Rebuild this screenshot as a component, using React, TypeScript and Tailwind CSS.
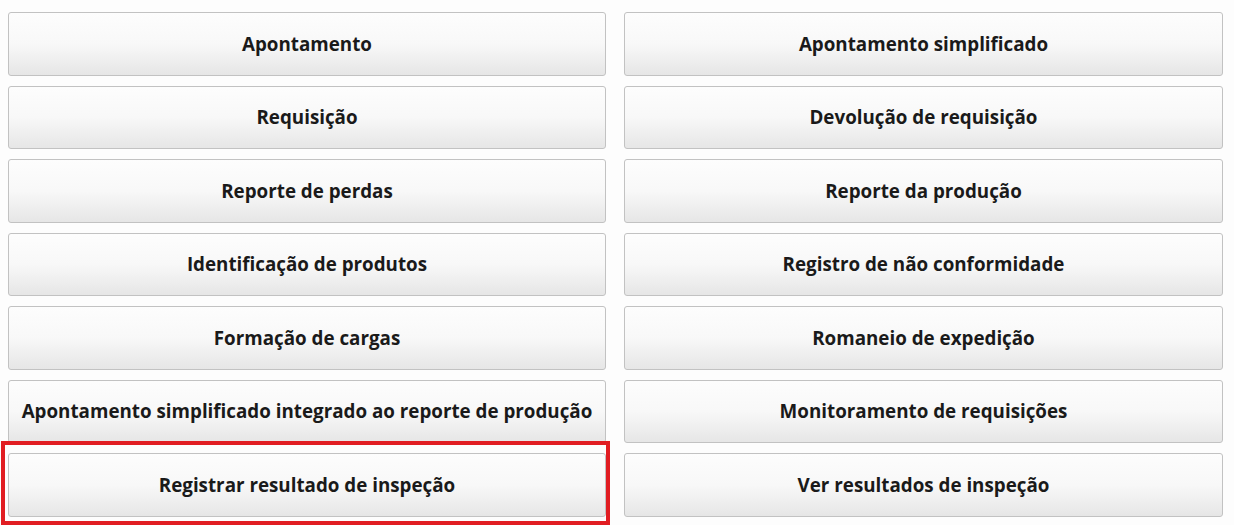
const items: [string, string][] = [
  ["Apontamento", "Apontamento simplificado"],
  ["Requisição", "Devolução de requisição"],
  ["Reporte de perdas", "Reporte da produção"],
  ["Identificação de produtos", "Registro de não conformidade"],
  ["Formação de cargas", "Romaneio de expedição"],
  ["Apontamento simplificado integrado ao reporte de produção", "Monitoramento de requisições"],
  ["Registrar resultado de inspeção", "Ver resultados de inspeção"],
];

function MenuButton({ label }: { label: string }) {
  return (
    <button className="h-[63.5px] w-full rounded-[3px] border border-[#c2c2c2] bg-gradient-to-b from-[#fdfdfd] via-[#f8f8f8] to-[#e6e6e6] text-[18.8px] font-bold text-[#1a1a1a]">
      {label}
    </button>
  );
}

export default function App() {
  const flat = items.flat();
  return (
    <div
      className="min-h-[525px] w-[1234px] bg-[#fdfdfd] pl-[8px] pt-[12px]"
      style={{ fontFamily: '"Open Sans", "Noto Sans", sans-serif' }}
    >
      <div className="grid w-[1215px] grid-cols-[598px_599px] gap-x-[18px] gap-y-[10px]">
        {flat.map((label, i) => (
          <div key={i} className="relative">
            <MenuButton label={label} />
            {label === "Registrar resultado de inspeção" && (
              <div className="pointer-events-none absolute -left-[7px] -right-[4px] -top-[12px] -bottom-[8px] border-4 border-[#e11d22]" />
            )}
          </div>
        ))}
      </div>
    </div>
  );
}
